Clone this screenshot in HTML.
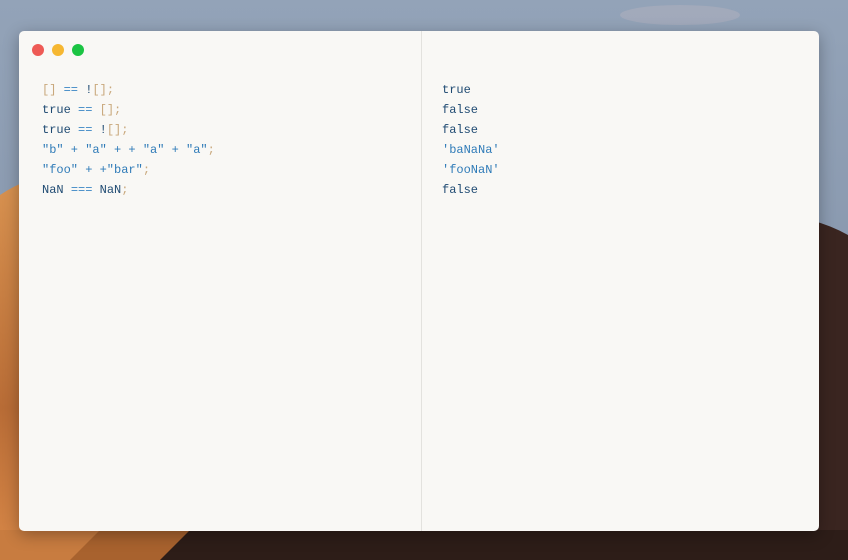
<!DOCTYPE html>
<html><head><meta charset="utf-8"><style>
html,body{margin:0;padding:0;width:848px;height:560px;overflow:hidden}
body{position:relative;background:#8e9fb6}
.bg{position:absolute;left:0;top:0}
.win{position:absolute;left:19px;top:31px;width:800px;height:500px;background:#f9f8f5;border-radius:5px;box-shadow:0 4px 16px rgba(0,0,0,.3)}
.div{position:absolute;left:402px;top:0;width:1px;height:500px;background:#e3e2de}
.dot{position:absolute;top:13px;width:12px;height:12px;border-radius:50%}
pre{position:absolute;margin:0;font-family:"Liberation Mono","DejaVu Sans Mono",monospace;font-size:12px;line-height:20px;color:#1f4a72}
.s{color:#2f7bb8}.o{color:#3a86c4}.b{color:#c9a87c}
</style></head><body>
<svg class="bg" width="848" height="560" viewBox="0 0 848 560">
<defs>
<linearGradient id="sky" x1="0" y1="0" x2="0" y2="1"><stop offset="0" stop-color="#93a3b8"/><stop offset="1" stop-color="#7f8ea5"/></linearGradient>
<linearGradient id="dune" x1="0" y1="0" x2="0" y2="1"><stop offset="0" stop-color="#d89250"/><stop offset="0.6" stop-color="#b86c36"/><stop offset="1" stop-color="#d88848"/></linearGradient>
</defs>
<rect width="848" height="560" fill="url(#sky)"/>
<ellipse cx="680" cy="15" rx="60" ry="10" fill="#b8b4c0" opacity=".4"/>
<path d="M0 195 Q15 185 30 180 L30 560 L0 560Z" fill="url(#dune)"/>
<path d="M810 220 Q830 225 848 235 L848 560 L780 560 Z" fill="#3a2520"/>
<rect x="0" y="530" width="848" height="30" fill="#2d1d18"/>
<path d="M0 530 L190 530 L160 560 L0 560Z" fill="#a8622e"/>
<path d="M0 530 L100 530 L70 560 L0 560Z" fill="#c87c40"/>
</svg>
<div class="win">
<div class="dot" style="left:13px;background:#ee5a55"></div>
<div class="dot" style="left:33px;background:#f6b731"></div>
<div class="dot" style="left:53px;background:#1bc443"></div>
<div class="div"></div>
<pre style="left:23px;top:49px"><span class="b">[]</span> <span class="o">==</span> !<span class="b">[];</span>
true <span class="o">==</span> <span class="b">[];</span>
true <span class="o">==</span> !<span class="b">[];</span>
<span class="s">"b" + "a" + + "a" + "a"</span><span class="b">;</span>
<span class="s">"foo" + +"bar"</span><span class="b">;</span>
NaN <span class="o">===</span> NaN<span class="b">;</span></pre>
<pre style="left:423px;top:49px">true
false
false
<span class="s">'baNaNa'</span>
<span class="s">'fooNaN'</span>
false</pre>
</div>
</body></html>
